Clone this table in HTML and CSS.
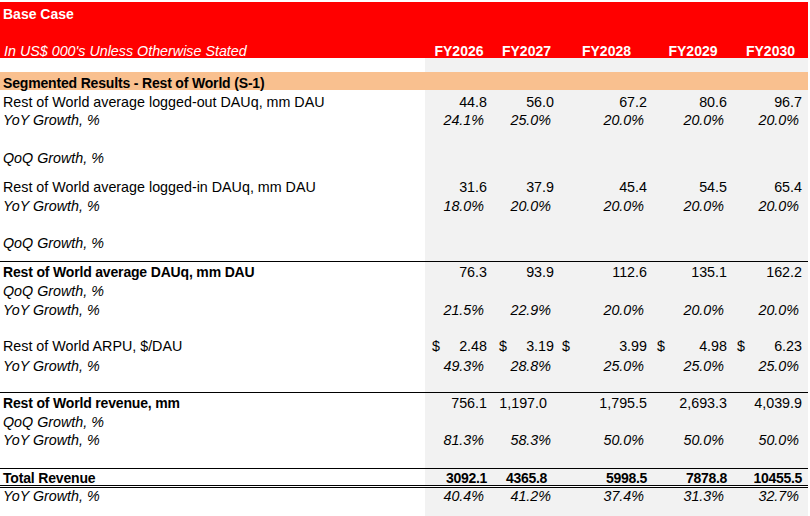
FILE: index.html
```html
<!DOCTYPE html>
<html>
<head>
<meta charset="utf-8">
<link rel="stylesheet" href="styles.css">
</head>
<body>
<div class="sheet">
  <div class="row hdr h19"><div class="l hb">Base Case</div><div class="n"></div><div class="n"></div><div class="n"></div><div class="n"></div><div class="n"></div></div>
  <div class="row hdr h18"><div class="l"></div><div class="n"></div><div class="n"></div><div class="n"></div><div class="n"></div><div class="n"></div></div>
  <div class="row hdr h19"><div class="l i">In US$ 000's Unless Otherwise Stated</div><div class="n hc">FY2026</div><div class="n hc">FY2027</div><div class="n hc">FY2028</div><div class="n hc">FY2029</div><div class="n hc">FY2030</div></div>
  <div class="row h14"><div class="l"></div><div class="n"></div><div class="n"></div><div class="n"></div><div class="n"></div><div class="n"></div></div>
  <div class="row sec h18"><div class="l b">Segmented Results - Rest of World (S-1)</div><div class="n"></div><div class="n"></div><div class="n"></div><div class="n"></div><div class="n"></div></div>

  <div class="row h19"><div class="l">Rest of World average logged-out DAUq, mm DAU</div><div class="n">44.8</div><div class="n">56.0</div><div class="n">67.2</div><div class="n">80.6</div><div class="n">96.7</div></div>
  <div class="row h18"><div class="l i">YoY Growth, %</div><div class="n p">24.1%</div><div class="n p">25.0%</div><div class="n p">20.0%</div><div class="n p">20.0%</div><div class="n p">20.0%</div></div>
  <div class="row h19"><div class="l"></div><div class="n"></div><div class="n"></div><div class="n"></div><div class="n"></div><div class="n"></div></div>
  <div class="row h19"><div class="l i">QoQ Growth, %</div><div class="n"></div><div class="n"></div><div class="n"></div><div class="n"></div><div class="n"></div></div>
  <div class="row h10"><div class="l"></div><div class="n"></div><div class="n"></div><div class="n"></div><div class="n"></div><div class="n"></div></div>

  <div class="row h19"><div class="l">Rest of World average logged-in DAUq, mm DAU</div><div class="n">31.6</div><div class="n">37.9</div><div class="n">45.4</div><div class="n">54.5</div><div class="n">65.4</div></div>
  <div class="row h19"><div class="l i">YoY Growth, %</div><div class="n p">18.0%</div><div class="n p">20.0%</div><div class="n p">20.0%</div><div class="n p">20.0%</div><div class="n p">20.0%</div></div>
  <div class="row h18"><div class="l"></div><div class="n"></div><div class="n"></div><div class="n"></div><div class="n"></div><div class="n"></div></div>
  <div class="row h19"><div class="l i">QoQ Growth, %</div><div class="n"></div><div class="n"></div><div class="n"></div><div class="n"></div><div class="n"></div></div>
  <div class="row h11"><div class="l"></div><div class="n"></div><div class="n"></div><div class="n"></div><div class="n"></div><div class="n"></div></div>

  <div class="row top h18"><div class="l b">Rest of World average DAUq, mm DAU</div><div class="n">76.3</div><div class="n">93.9</div><div class="n">112.6</div><div class="n">135.1</div><div class="n">162.2</div></div>
  <div class="row h19"><div class="l i">QoQ Growth, %</div><div class="n"></div><div class="n"></div><div class="n"></div><div class="n"></div><div class="n"></div></div>
  <div class="row h185"><div class="l i">YoY Growth, %</div><div class="n p">21.5%</div><div class="n p">22.9%</div><div class="n p">20.0%</div><div class="n p">20.0%</div><div class="n p">20.0%</div></div>
  <div class="row h18"><div class="l"></div><div class="n"></div><div class="n"></div><div class="n"></div><div class="n"></div><div class="n"></div></div>
  <div class="row h185"><div class="l">Rest of World ARPU, $/DAU</div><div class="n d"><span>$</span><span>2.48</span></div><div class="n d d2"><span>$</span><span>3.19</span></div><div class="n d d3"><span>$</span><span>3.99</span></div><div class="n d d4"><span>$</span><span>4.98</span></div><div class="n d d4"><span>$</span><span>6.23</span></div></div>
  <div class="row h195"><div class="l i">YoY Growth, %</div><div class="n p">49.3%</div><div class="n p">28.8%</div><div class="n p">25.0%</div><div class="n p">25.0%</div><div class="n p">25.0%</div></div>
  <div class="row h19"><div class="l"></div><div class="n"></div><div class="n"></div><div class="n"></div><div class="n"></div><div class="n"></div></div>

  <div class="row top h185"><div class="l b">Rest of World revenue, mm</div><div class="n">756.1</div><div class="n w">1,197.0</div><div class="n">1,795.5</div><div class="n">2,693.3</div><div class="n">4,039.9</div></div>
  <div class="row h19"><div class="l i">QoQ Growth, %</div><div class="n"></div><div class="n"></div><div class="n"></div><div class="n"></div><div class="n"></div></div>
  <div class="row h18"><div class="l i">YoY Growth, %</div><div class="n p">81.3%</div><div class="n p">58.3%</div><div class="n p">50.0%</div><div class="n p">50.0%</div><div class="n p">50.0%</div></div>
  <div class="row h21"><div class="l"></div><div class="n"></div><div class="n"></div><div class="n"></div><div class="n"></div><div class="n"></div></div>

  <div class="row top total"><div class="l b">Total Revenue</div><div class="n b">3092.1</div><div class="n b w">4365.8</div><div class="n b">5998.5</div><div class="n b">7878.8</div><div class="n b">10455.5</div></div>
  <div class="row h15"><div class="l i">YoY Growth, %</div><div class="n p">40.4%</div><div class="n p">41.2%</div><div class="n p">37.4%</div><div class="n p">31.3%</div><div class="n p">32.7%</div></div>
  <div class="row h13"><div class="l"></div><div class="n"></div><div class="n"></div><div class="n"></div><div class="n"></div><div class="n"></div></div>
</div>
</body>
</html>
```

FILE: styles.css
```css
html, body {
  margin: 0;
  padding: 0;
  background: #ffffff;
}

body {
  font-family: "Liberation Sans", Arial, sans-serif;
  font-size: 14.3px;
  color: #000000;
  overflow: hidden;
}

.sheet {
  width: 808px;
  padding-top: 2px;
  display: flex;
  flex-direction: column;
}

.row {
  display: grid;
  grid-template-columns: 425px 68px 67px 93px 80px 75px;
  box-sizing: border-box;
}

.row > div {
  display: flex;
  align-items: flex-end;
  line-height: 14px;
  white-space: nowrap;
  overflow: visible;
  min-width: 0;
}

.l {
  padding-left: 3px;
}

.n {
  justify-content: flex-end;
  padding-right: 6px;
  background: #f2f2f2;
}

.hdr {
  background: #ff0000;
  color: #ffffff;
}

.hdr .n {
  background: transparent;
}

.hdr .l.i {
  padding-left: 4px;
}

.hb {
  font-weight: bold;
  font-size: 14px;
}

.hc {
  justify-content: center;
  font-weight: bold;
  font-size: 14px;
  padding-right: 0;
}

.sec {
  background: #f9c08f;
}

.sec .n {
  background: transparent;
}

.b {
  font-weight: bold;
  font-size: 14px;
  letter-spacing: -0.17px;
}

.n.b {
  letter-spacing: -0.3px;
}

.i {
  font-style: italic;
}

.p {
  font-style: italic;
  padding-right: 9px;
}

.d {
  justify-content: space-between;
  padding-left: 7px;
}

.d2 {
  padding-left: 6px;
}

.d3 {
  padding-left: 2px;
}

.d4 {
  padding-left: 4px;
}

.w {
  padding-right: 13px;
}

.top {
  border-top: 1px solid #000000;
}

.total {
  height: 20px;
  border-bottom: 3px double #000000;
}

.h10 { height: 10px; }
.h11 { height: 11px; }
.h13 { height: 13px; }
.h14 { height: 14px; }
.h15 { height: 15px; }
.h18 { height: 18px; }
.h185 { height: 18.5px; }
.h19 { height: 19px; }
.h195 { height: 19.5px; }
.h21 { height: 21px; }
```
